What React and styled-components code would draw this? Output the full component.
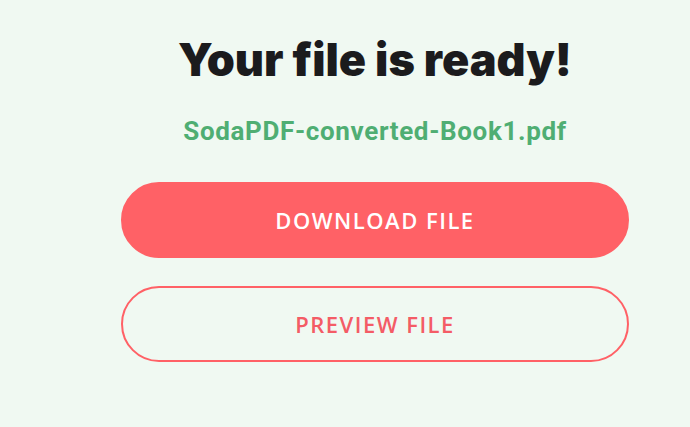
import React from "react";
import styled, { createGlobalStyle } from "styled-components";

const Global = createGlobalStyle`
  html, body { margin: 0; padding: 0; background: #f0f9f2; }
  body { width: 690px; height: 427px; overflow: hidden; }
`;

const Page = styled.div`
  width: 690px;
  height: 427px;
  box-sizing: border-box;
  padding: 32px 0 0 121px;
`;

const Column = styled.div`
  width: 508px;
  display: flex;
  flex-direction: column;
  align-items: center;
`;

const Title = styled.h1`
  margin: 0;
  font-family: "Inter", "Liberation Sans", sans-serif;
  font-weight: 900;
  font-size: 45px;
  line-height: 56px;
  letter-spacing: 0px;
  color: #1b1b1d;
`;

const FileName = styled.div`
  margin-top: 28px;
  font-family: Roboto, "Liberation Sans", sans-serif;
  font-weight: 700;
  font-size: 26px;
  line-height: 30px;
  letter-spacing: 0.65px;
  color: #4fae73;
`;

const Button = styled.button`
  box-sizing: border-box;
  width: 508px;
  height: 76px;
  margin-top: ${(p) => p.$mt}px;
  border-radius: 38px;
  border: 2px solid #ff6166;
  background: ${(p) => (p.$filled ? "#ff6166" : "transparent")};
  color: ${(p) => (p.$filled ? "#ffffff" : "#f45c66")};
  font-family: "Open Sans", "Liberation Sans", sans-serif;
  font-weight: 600;
  font-size: 22px;
  letter-spacing: 1.5px;
  padding: 0;
  cursor: pointer;
`;

export default function App() {
  return (
    <>
      <Global />
      <Page>
        <Column>
          <Title>Your file is ready!</Title>
          <FileName>SodaPDF-converted-Book1.pdf</FileName>
          <Button $filled $mt={36}>DOWNLOAD FILE</Button>
          <Button $mt={28}>PREVIEW FILE</Button>
        </Column>
      </Page>
    </>
  );
}
